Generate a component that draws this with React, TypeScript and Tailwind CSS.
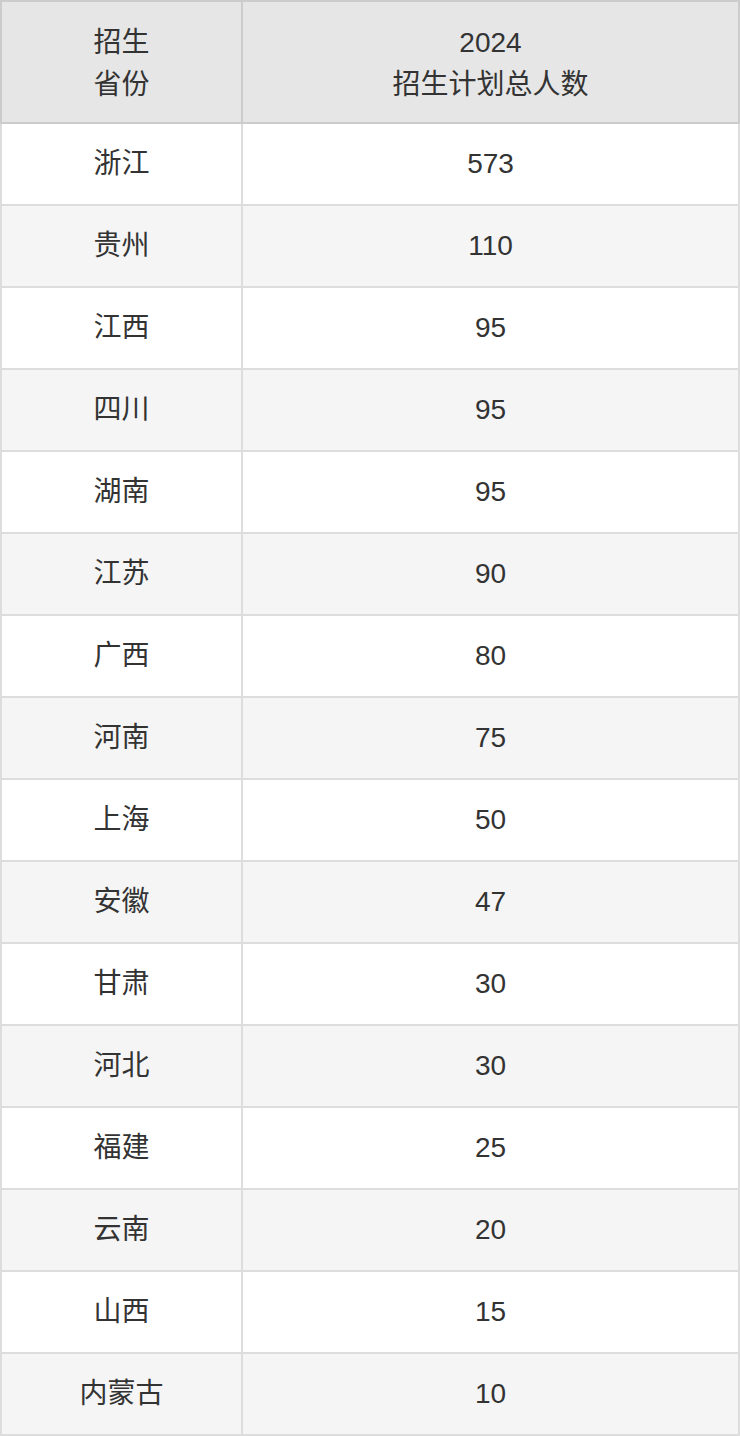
const rows: [string, string][] = [
  ['浙江', '573'],
  ['贵州', '110'],
  ['江西', '95'],
  ['四川', '95'],
  ['湖南', '95'],
  ['江苏', '90'],
  ['广西', '80'],
  ['河南', '75'],
  ['上海', '50'],
  ['安徽', '47'],
  ['甘肃', '30'],
  ['河北', '30'],
  ['福建', '25'],
  ['云南', '20'],
  ['山西', '15'],
  ['内蒙古', '10'],
]

export default function App() {
  return (
    <div
      className="w-[740px] text-[28px] leading-[42px] text-[#333333]"
      style={{ fontFamily: '"Liberation Sans", "Noto Sans CJK SC", sans-serif' }}
    >
      {/* header */}
      <div className="grid grid-cols-[239px_1fr] gap-x-[2px] bg-[#cccccc] p-[2px]">
        <div className="flex h-[120px] flex-col items-center justify-center bg-[#e6e6e6] pt-[4px] text-center">
          <span>招生</span>
          <span>省份</span>
        </div>
        <div className="flex h-[120px] flex-col items-center justify-center bg-[#e6e6e6] pt-[4px] text-center">
          <span>2024</span>
          <span>招生计划总人数</span>
        </div>
      </div>

      {/* body */}
      <div className="grid grid-cols-[239px_1fr] gap-[2px] bg-[#dddddd] px-[2px] pb-[2px]">
        {rows.map(([prov, num], i) => (
          <div key={prov} className="contents">
            <div className={`flex h-[80px] items-center justify-center ${i % 2 ? 'bg-[#f5f5f5]' : 'bg-white'}`}>
              {prov}
            </div>
            <div className={`flex h-[80px] items-center justify-center ${i % 2 ? 'bg-[#f5f5f5]' : 'bg-white'}`}>
              {num}
            </div>
          </div>
        ))}
      </div>
    </div>
  )
}
